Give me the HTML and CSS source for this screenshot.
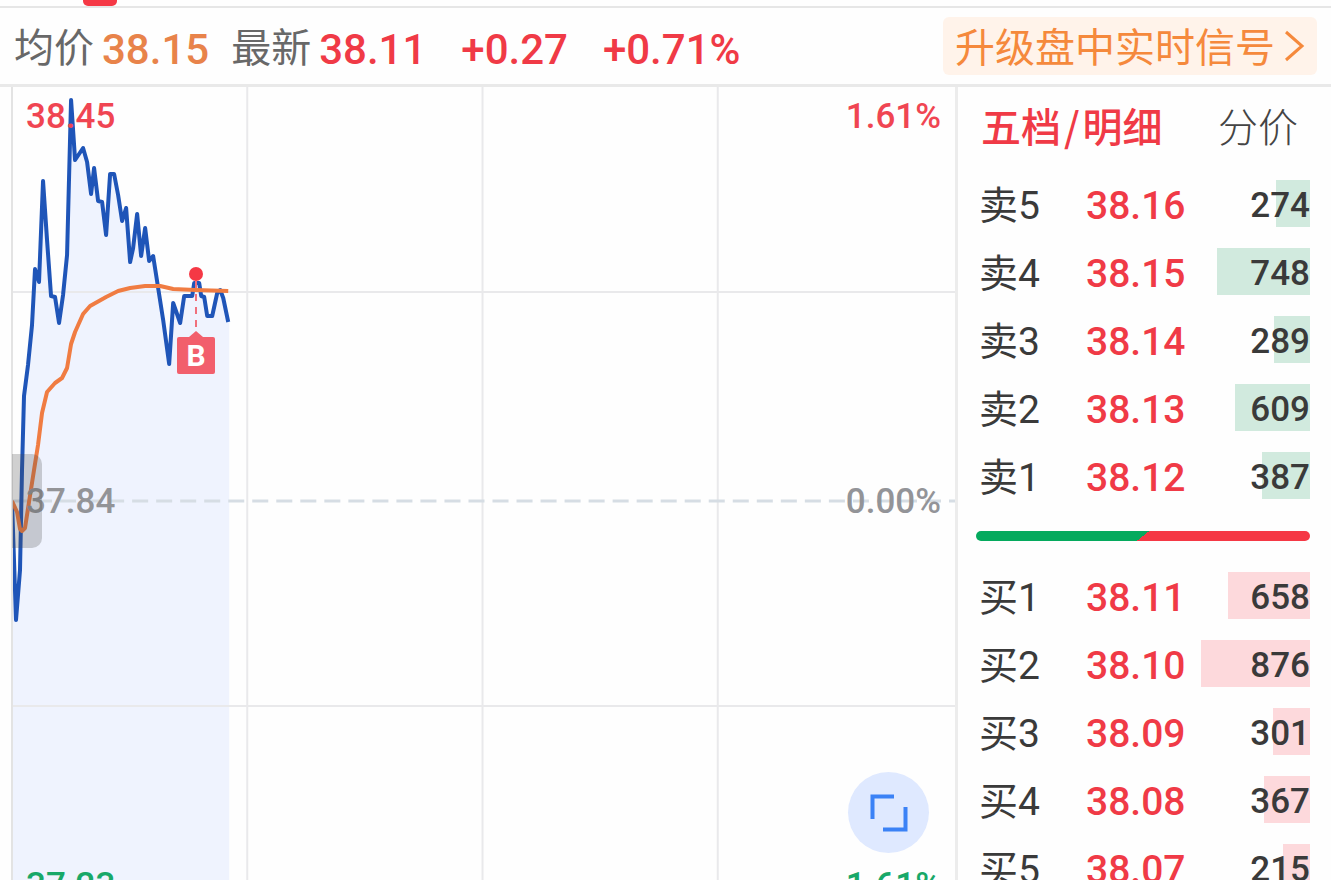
FILE: index.html
```html
<!DOCTYPE html>
<html lang="zh-CN">
<head>
    <meta charset="UTF-8">
    <meta name="viewport" content="width=device-width, initial-scale=1.0">
    <title>分时行情</title>
    <link rel="stylesheet" href="styles.css">
</head>
<body>

<div class="tab-strip"><span class="tab-indicator"></span></div>

<header class="quote-bar">
    <span class="quote-label">均价</span>
    <span class="quote-value avg">38.15</span>
    <span class="quote-label latest">最新</span>
    <span class="quote-value up">38.11</span>
    <span class="quote-value up change">+0.27</span>
    <span class="quote-value up change">+0.71%</span>
    <a class="upgrade" href="#"><span class="upgrade-text">升级盘中实时信号</span><svg class="chevron" width="20" height="32" viewBox="0 0 20 32"><path d="M1 2 L17 16 L1 30"/></svg></a>
</header>

<main class="content">
    <section class="chart">
        <svg class="plot" viewBox="13 87 941 828" preserveAspectRatio="none">
            <!-- price area -->
            <path class="area" d="M12 501 L16 620 L20 570 L22 470 L24 396 L28 365 L32 325 L35 269 L39 282 L43 181 L47 240 L51 296 L55 297 L59 323 L63 295 L67 255 L71 100 L75 160 L83 148 L87 162 L91 194 L94 168 L98 201 L102 202 L106 235 L110 174 L114 174 L118 195 L122 221 L126 208 L130 262 L133 248 L137 214 L141 256 L145 228 L149 261 L153 256 L163 320 L169 364 L173 303 L180 323 L184 296 L192 296 L194 283 L199 283 L201 296 L204 297 L207 316 L212 316 L217 293 L220 290 L223 298 L228 322 L229 322 L229 916 L12 916 Z"/>
            <!-- grid -->
            <path class="grid" d="M247 85 V916 M482 85 V916 M717 85 V916 M11 292 H957 M11 706 H957"/>
            <path class="zero" d="M12 501 H957"/>
            <!-- price and average lines -->
            <path class="price-line" d="M12 501 L16 620 L20 570 L22 470 L24 396 L28 365 L32 325 L35 269 L39 282 L43 181 L47 240 L51 296 L55 297 L59 323 L63 295 L67 255 L71 100 L75 160 L83 148 L87 162 L91 194 L94 168 L98 201 L102 202 L106 235 L110 174 L114 174 L118 195 L122 221 L126 208 L130 262 L133 248 L137 214 L141 256 L145 228 L149 261 L153 256 L163 320 L169 364 L173 303 L180 323 L184 296 L192 296 L194 283 L199 283 L201 296 L204 297 L207 316 L212 316 L217 293 L220 290 L223 298 L228 322"/>
            <path class="avg-line" d="M12 501 L17 512 L20 529 L22 531 L25 528 L29 502 L34 470 L38 445 L42 413 L47 392 L55 383 L62 378 L67 368 L71 344 L75 332 L83 314 L90 306 L106 297 L118 291 L130 288 L145 286 L160 286 L173 289 L195 290 L228 291"/>
        </svg>
        <span class="axis high-price">38.45</span>
        <span class="axis high-percent">1.61%</span>
        <span class="axis mid-price">37.84</span>
        <span class="axis mid-percent">0.00%</span>
        <span class="axis low-price">37.23</span>
        <span class="axis low-percent">1.61%</span>
        <span class="handle"></span>
        <div class="marker">
            <span class="marker-dot"></span>
            <span class="marker-stem"></span>
            <span class="marker-tip"></span>
            <span class="marker-box">B</span>
        </div>
        <button class="expand" type="button" aria-label="全屏">
            <svg width="40" height="40" viewBox="0 0 40 40"><path d="M25 3.500 H3.500 V26 M14 36.500 H36.500 V14"/></svg>
        </button>
    </section>

    <aside class="book">
        <nav class="book-tabs">
            <button class="book-tab active" type="button">五档<span class="slash">/</span>明细</button>
            <button class="book-tab" type="button">分价</button>
        </nav>
        <table class="orders sell">
            <tr><th scope="row">卖5</th><td class="price">38.16</td><td class="volume"><span class="bar" style="width: 31%"></span><span class="count">274</span></td></tr>
            <tr><th scope="row">卖4</th><td class="price">38.15</td><td class="volume"><span class="bar" style="width: 85%"></span><span class="count">748</span></td></tr>
            <tr><th scope="row">卖3</th><td class="price">38.14</td><td class="volume"><span class="bar" style="width: 33%"></span><span class="count">289</span></td></tr>
            <tr><th scope="row">卖2</th><td class="price">38.13</td><td class="volume"><span class="bar" style="width: 69%"></span><span class="count">609</span></td></tr>
            <tr><th scope="row">卖1</th><td class="price">38.12</td><td class="volume"><span class="bar" style="width: 44%"></span><span class="count">387</span></td></tr>
        </table>
        <div class="ratio"></div>
        <table class="orders buy">
            <tr><th scope="row">买1</th><td class="price">38.11</td><td class="volume"><span class="bar" style="width: 75%"></span><span class="count">658</span></td></tr>
            <tr><th scope="row">买2</th><td class="price">38.10</td><td class="volume"><span class="bar" style="width: 100%"></span><span class="count">876</span></td></tr>
            <tr><th scope="row">买3</th><td class="price">38.09</td><td class="volume"><span class="bar" style="width: 34%"></span><span class="count">301</span></td></tr>
            <tr><th scope="row">买4</th><td class="price">38.08</td><td class="volume"><span class="bar" style="width: 42%"></span><span class="count">367</span></td></tr>
            <tr><th scope="row">买5</th><td class="price">38.07</td><td class="volume"><span class="bar" style="width: 25%"></span><span class="count">215</span></td></tr>
        </table>
    </aside>
</main>

</body>
</html>
```
FILE: styles.css
```css
* {
    box-sizing: border-box;
}
body {
    margin: 0;
    height: 100vh;
    overflow: hidden;
    background-color: #fefefe;
    color: #3a3a3a;
    font-family: Roboto, "Noto Sans CJK SC", sans-serif;
}
button {
    padding: 0;
    border: none;
    background: none;
    font-family: inherit;
    cursor: pointer;
}
.tab-strip {
    height: 8px;
    padding-left: 83px;
    border-bottom: 2px solid #e6e6e6;
}
.tab-indicator {
    display: block;
    width: 34px;
    height: 6px;
    border-radius: 0 0 5px 5px;
    background-color: #f53845;
}

/* Quote bar */
.quote-bar {
    display: flex;
    align-items: center;
    height: 76px;
    padding: 0 14px;
    line-height: 56px;
    white-space: nowrap;
}
.quote-label {
    padding-top: 6px;
    font-size: 40px;
    font-weight: 400;
    color: #686868;
}
.quote-value {
    margin-left: 8px;
    padding-top: 8px;
    font-size: 42px;
    font-weight: 500;
}
.latest {
    margin-left: 22px;
}
.change {
    margin-left: 35px;
}
.avg {
    color: #e8834a;
}
.up {
    color: #f03a46;
}
.upgrade {
    display: flex;
    align-items: center;
    gap: 10px;
    height: 58px;
    margin-left: auto;
    padding: 0 12px;
    border-radius: 6px;
    background-color: #fff3ea;
    color: #f5893c;
    font-size: 40px;
    text-decoration: none;
}
.upgrade-text {
    padding-top: 6px;
}
.chevron {
    fill: none;
    stroke: #f5893c;
    stroke-width: 3;
}

/* Chart */
.content {
    display: flex;
    border-top: 3px solid #e9e9e9;
}
.chart {
    position: relative;
    flex: 1;
    height: 828px;
    margin-left: 11px;
    border-left: 2px solid #e3e3e3;
    border-right: 3px solid #ececec;
}
.plot {
    display: block;
    width: 100%;
    height: 100%;
    fill: none;
}
.area {
    fill: #eff3fe;
}
.grid {
    stroke: #e9e9eb;
    stroke-width: 2;
}
.zero {
    stroke: #d6dde4;
    stroke-width: 3;
    stroke-dasharray: 16 8;
}
.price-line {
    stroke: #1f55b8;
    stroke-width: 4;
    stroke-linejoin: round;
}
.avg-line {
    stroke: #f07c42;
    stroke-width: 4;
    stroke-linejoin: round;
}
.axis {
    position: absolute;
    font-size: 35px;
    line-height: 44px;
    font-weight: 500;
}
.high-price, .mid-price, .low-price {
    left: 13px;
}
.high-percent, .mid-percent, .low-percent {
    right: 14px;
}
.high-price, .high-percent {
    top: 8px;
    color: #f04552;
}
.mid-price, .mid-percent {
    top: 393px;
    color: #939498;
}
.low-price, .low-percent {
    top: 777px;
    color: #18a868;
}
.handle {
    position: absolute;
    left: -1px;
    top: 367px;
    width: 30px;
    height: 94px;
    border-radius: 0 10px 10px 0;
    background-color: rgba(70, 70, 70, 0.25);
}
.marker {
    position: absolute;
    left: 164px;
    top: 180px;
    width: 38px;
    display: flex;
    flex-direction: column;
    align-items: center;
}
.marker-dot {
    width: 14px;
    height: 14px;
    border-radius: 50%;
    background-color: #f53845;
}
.marker-stem {
    width: 2px;
    height: 50px;
    background: repeating-linear-gradient(#f0707c 0 7px, transparent 7px 13px);
}
.marker-tip {
    border: 7px solid transparent;
    border-top: none;
    border-bottom: 6px solid #f25f6c;
}
.marker-box {
    width: 38px;
    height: 37px;
    border-radius: 2px;
    background-color: #f25f6c;
    color: #fff;
    font-size: 30px;
    line-height: 38px;
    font-weight: 700;
    text-align: center;
}
.expand {
    position: absolute;
    right: 26px;
    top: 685px;
    display: flex;
    align-items: center;
    justify-content: center;
    width: 81px;
    height: 81px;
    border-radius: 50%;
    background-color: #dfe9ff;
}
.expand svg {
    fill: none;
    stroke: #3b82f6;
    stroke-width: 4;
}

/* Order book */
.book {
    width: 373px;
    padding: 0 21px 0 18px;
}
.book-tabs {
    display: flex;
    justify-content: space-between;
    height: 83px;
    padding: 0 12px 8px 5px;
}
.book-tab {
    font-family: "Noto Sans CJK SC", sans-serif;
    font-size: 40px;
    font-weight: 300;
    color: #444;
}
.book-tab.active {
    font-weight: 500;
    color: #f03a46;
}
.slash {
    margin: 0 3px;
}
.orders {
    width: 100%;
    border-collapse: collapse;
    table-layout: fixed;
}
.orders tr {
    height: 68px;
}
.orders th, .orders td {
    padding: 4px 0 0;
    line-height: 48px;
    text-align: left;
}
.orders th {
    width: 110px;
    padding-left: 3px;
    font-size: 39px;
    font-weight: 400;
}
.orders .price {
    font-size: 39px;
    font-weight: 500;
    color: #f03a46;
}
.orders .volume {
    position: relative;
    width: 109px;
    font-size: 35px;
    font-weight: 500;
    text-align: right;
}
.bar {
    position: absolute;
    right: 0;
    top: 10px;
    height: 47px;
}
.sell .bar {
    background-color: #d1eade;
}
.buy .bar {
    background-color: #fdd9dc;
}
.count {
    position: relative;
}
.ratio {
    height: 10px;
    margin: 21px 0;
    border-radius: 5px;
    background: linear-gradient(142deg, #05aa5e 50%, #f53845 50%);
}
```
